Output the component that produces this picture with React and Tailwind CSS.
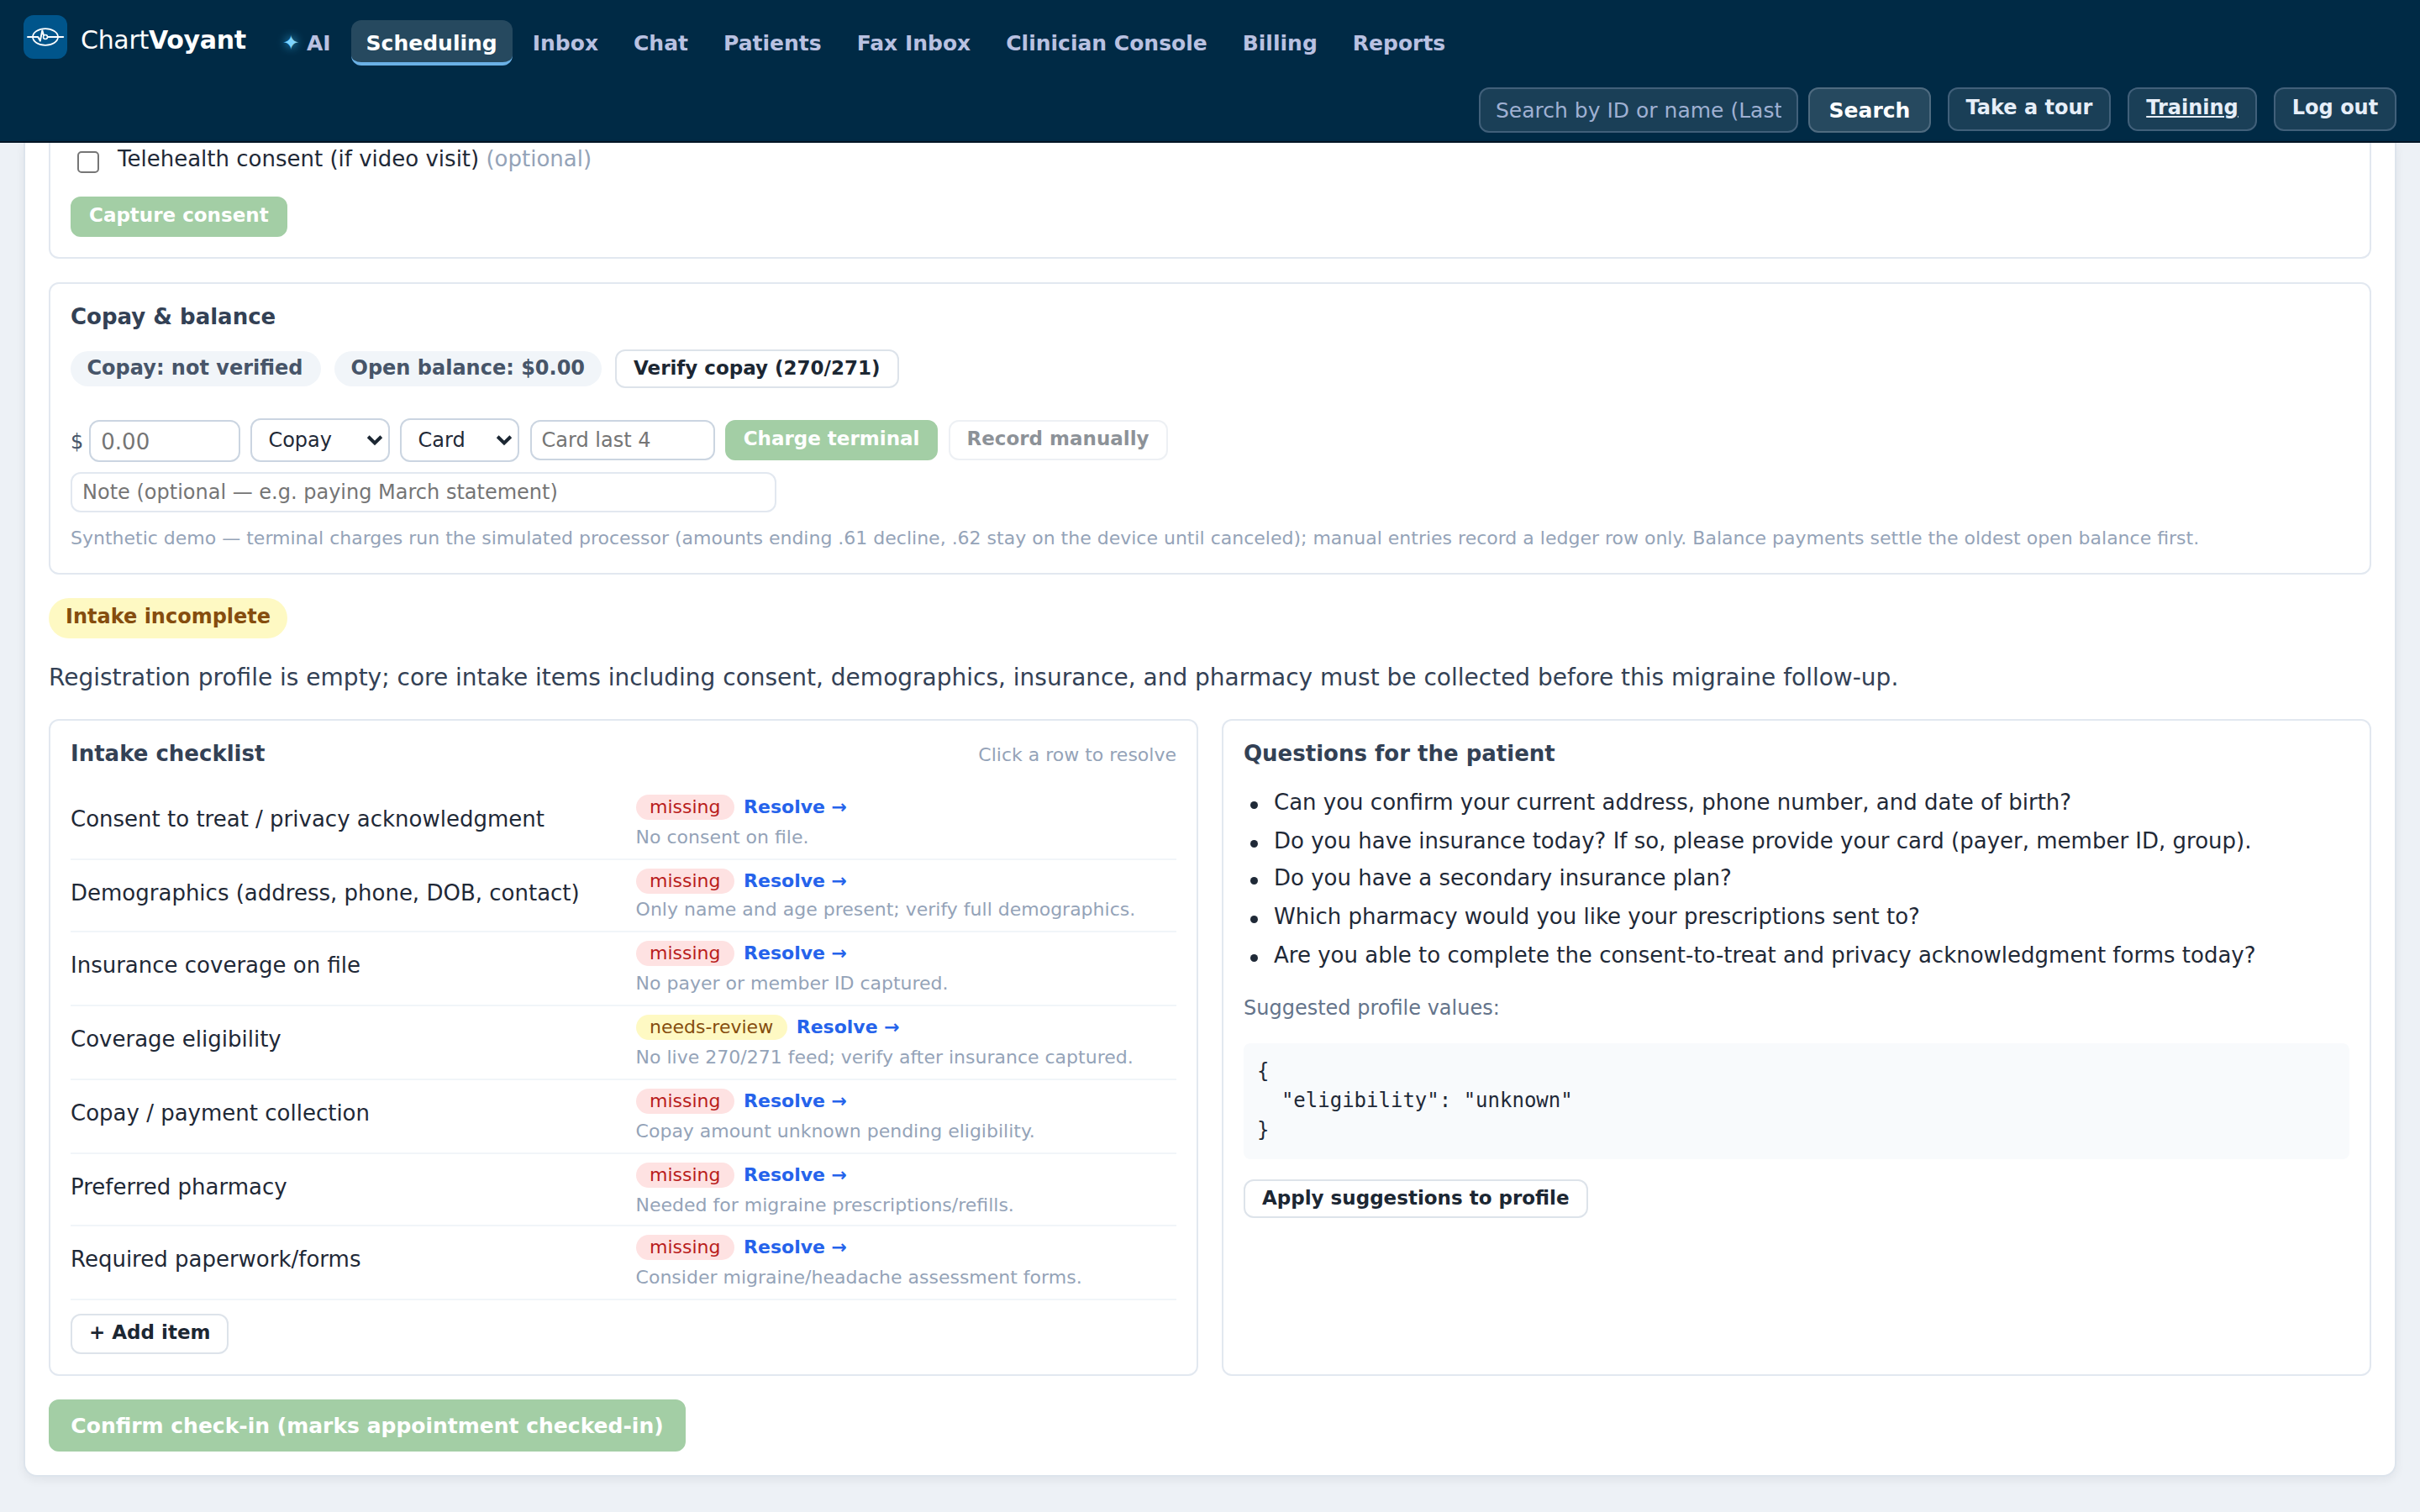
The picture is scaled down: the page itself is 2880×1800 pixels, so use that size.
import React from "react";

const NAV = ["Inbox", "Chat", "Patients", "Fax Inbox", "Clinician Console", "Billing", "Reports"];

const CHECKLIST = [
  { label: "Consent to treat / privacy acknowledgment", status: "missing", note: "No consent on file." },
  { label: "Demographics (address, phone, DOB, contact)", status: "missing", note: "Only name and age present; verify full demographics.", row: "h-[86px]", gap: "mt-0" },
  { label: "Insurance coverage on file", status: "missing", note: "No payer or member ID captured." },
  { label: "Coverage eligibility", status: "needs-review", note: "No live 270/271 feed; verify after insurance captured." },
  { label: "Copay / payment collection", status: "missing", note: "Copay amount unknown pending eligibility." },
  { label: "Preferred pharmacy", status: "missing", note: "Needed for migraine prescriptions/refills.", row: "h-[86px]" },
  { label: "Required paperwork/forms", status: "missing", note: "Consider migraine/headache assessment forms." },
];

const QUESTIONS = [
  { text: "Can you confirm your current address, phone number, and date of birth?", h: "h-[46px]" },
  { text: "Do you have insurance today? If so, please provide your card (payer, member ID, group).", h: "h-[44px]" },
  { text: "Do you have a secondary insurance plan?", h: "h-[46px]" },
  { text: "Which pharmacy would you like your prescriptions sent to?", h: "h-[46px]" },
  { text: "Are you able to complete the consent-to-treat and privacy acknowledgment forms today?", h: "h-[42px]" },
];

function Logo() {
  return (
    <div className="mt-[18px] size-[52px] shrink-0 rounded-[12px] bg-[#00558b]">
      <svg viewBox="0 0 52 52" className="size-full" fill="none" stroke="#fff" strokeLinecap="round" strokeLinejoin="round">
        <ellipse cx="26" cy="26" rx="15" ry="9.8" strokeWidth="1.7" />
        <path d="M5 26H17.2L19.8 30.6L22.3 18.4L24 24" strokeWidth="2" />
        <circle cx="26" cy="26" r="2.5" strokeWidth="1.5" />
        <path d="M28.8 26H47.2" strokeWidth="2" />
      </svg>
    </div>
  );
}

function NavItem({ children, active }) {
  return (
    <a
      className={
        "flex h-[54px] shrink-0 items-start rounded-[12px] border-b-4 px-[18px] pt-[5px] text-[25px] leading-[45px] font-bold whitespace-nowrap " +
        (active ? "border-[#6bb1e6] bg-[#26495f] text-white" : "border-transparent text-[#b9c1e1]")
      }
    >
      {children}
    </a>
  );
}

function HeaderButton({ children, underline, width }) {
  return (
    <button
      className={
        "h-[52px] shrink-0 rounded-[12px] border-2 border-[#41607a] bg-[#1a3f57] pb-[4px] text-center text-[24px] leading-[44px] font-bold whitespace-nowrap text-[#e6eef8] " +
        width +
        (underline ? " underline" : "")
      }
    >
      {children}
    </button>
  );
}

function Button({ children, kind = "plain", size = "h-[48px] pb-[4px]" }) {
  const tone = {
    plain: "border-[#dde3ea] bg-white text-[#1c2733]",
    disabled: "border-[#dde3ea] bg-white text-[#1c2733] opacity-50",
    green: "border-[#a3cea5] bg-[#a3cea5] text-white",
  }[kind];
  return (
    <button className={"block shrink-0 rounded-[12px] border-2 px-[20px] text-[23px] leading-[40px] font-bold whitespace-nowrap " + size + " " + tone}>
      {children}
    </button>
  );
}

function Select({ children, width }) {
  return (
    <div className={"flex h-[52px] shrink-0 items-center justify-between rounded-[12px] border-2 border-[#cbd5e1] bg-white pr-[6px] pl-[19px] text-[24px] leading-[48px] text-[#1f2937] " + width}>
      <span>{children}</span>
      <svg width="20" height="14" viewBox="0 0 20 14" fill="none" stroke="#1c2733" strokeWidth="4">
        <path d="M2.2 2.8L10 10.4L17.8 2.8" />
      </svg>
    </div>
  );
}

function Badge({ children, width }) {
  return (
    <span className={"h-[42px] rounded-full bg-[#f1f5f9] px-[19.5px] text-[24px] leading-[40px] font-bold whitespace-nowrap text-[#475569] " + width}>
      {children}
    </span>
  );
}

function Title({ children }) {
  return <h3 className="text-[26px] leading-[30px] font-bold text-[#334155]">{children}</h3>;
}

function ChecklistRow({ item }) {
  const pill = item.status === "missing" ? "bg-[#fee2e2] text-[#b91c1c]" : "bg-[#fef9c3] text-[#854d0e]";
  return (
    <div className={"flex border-b-2 border-[#f1f5f9] " + (item.row || "h-[88px]")}>
      <div className="w-[672.6px] shrink-0 text-[26px] leading-[78px] text-[#1f2937]">{item.label}</div>
      <div className="min-w-0 flex-1 pt-[10px] text-[22px]">
        <div className="flex h-[30px] gap-[11.2px] leading-[29px]">
          <span className={"rounded-full px-[16.4px] " + pill}>{item.status}</span>
          <a className="font-bold text-[#2563eb]">Resolve →</a>
        </div>
        <div className={"leading-[37px] text-[#94a3b8] " + (item.gap || "mt-[2px]")}>{item.note}</div>
      </div>
    </div>
  );
}

export default function App() {
  return (
    <div className="flex h-[1800px] w-[2880px] flex-col overflow-hidden bg-[#edf1f6] font-['DejaVu_Sans',sans-serif] text-[#1f2937]">
      <header className="flex h-[170px] shrink-0 flex-col border-b-2 border-[#001424] bg-[#002a45] px-[28px]">
        <div className="flex h-[104px] items-start">
          <Logo />
          <div className="mt-[18px] ml-[16px] text-[30px] leading-[59px] tracking-[-0.3px] whitespace-nowrap text-white">
            Chart<b>Voyant</b>
          </div>
          <nav className="mt-[24px] ml-[25.5px] flex gap-[6px]">
            <NavItem>
              <span className="mr-[8.5px] text-[24px] font-normal text-[#7dd3fc] [text-shadow:0_0_12px_#38bdf8]">✦</span>
              AI
            </NavItem>
            <NavItem active>Scheduling</NavItem>
            {NAV.map((label) => (
              <NavItem key={label}>{label}</NavItem>
            ))}
          </nav>
        </div>
        <div className="flex items-start justify-end">
          <input
            placeholder="Search by ID or name (Last"
            className="h-[54px] w-[380px] rounded-[12px] border-2 border-[#41607a] bg-[#1a3f57] px-[18px] pt-px text-[25px] placeholder:text-[#9fb0d2]"
          />
          <button className="mr-[20px] ml-[12px] h-[54px] w-[146px] rounded-[12px] border-2 border-[#4f6b80] bg-[#26495f] pt-px text-center text-[25px] leading-[50px] font-bold text-white">
            Search
          </button>
          <div className="flex gap-[20px]">
            <HeaderButton width="w-[194px]">Take a tour</HeaderButton>
            <HeaderButton width="w-[154px]" underline>
              Training
            </HeaderButton>
            <HeaderButton width="w-[146px]">Log out</HeaderButton>
          </div>
        </div>
      </header>

      <main className="mx-[28px] flex h-[1588px] shrink-0 flex-col gap-[28px] rounded-b-[16px] border-2 border-t-0 border-[#dde4ec] bg-white px-[28px] pb-[28px] shadow-[0_4px_12px_rgba(15,23,42,0.06)]">
        <section className="h-[138px] shrink-0 rounded-b-[12px] border-2 border-t-0 border-[#e2e8f0] px-[24px]">
          <label className="flex h-[38px] items-start pl-[8px] text-[26px] leading-[38px]">
            <span className="mt-[10px] mr-[22px] size-[26px] rounded-[5px] border-2 border-[#767676] bg-white" />
            <span>
              Telehealth consent (if video visit) <span className="text-[#94a3b8]">(optional)</span>
            </span>
          </label>
          <div className="mt-[26px]">
            <Button kind="green">Capture consent</Button>
          </div>
        </section>

        <section className="h-[348px] shrink-0 rounded-[12px] border-2 border-[#e2e8f0] p-[24px]">
          <Title>Copay &amp; balance</Title>
          <div className="mt-[24px] flex items-center gap-[16px]">
            <Badge width="w-[298px]">Copay: not verified</Badge>
            <Badge width="w-[318px]">Open balance: $0.00</Badge>
            <Button size="h-[46px] pb-[2px]">Verify copay (270/271)</Button>
          </div>
          <div className="mt-[36px] flex h-[52px] items-center gap-[12.1px]">
            <label className="mt-[2px] flex items-center gap-[7px] text-[24px] leading-[50px] text-[#475569]">
              <span className="pt-[2px] leading-[48px]">$</span>
              <input placeholder="0.00" className="h-[50px] w-[180px] rounded-[12px] border-2 border-[#cbd5e1] bg-white px-[12px] pt-px text-[26px] placeholder:text-[#757575]" />
            </label>
            <Select width="w-[166px]">Copay</Select>
            <Select width="w-[142px]">Card</Select>
            <input placeholder="Card last 4" className="h-[48px] w-[220px] rounded-[12px] border-2 border-[#cbd5e1] bg-white px-[12px] text-[24px] placeholder:text-[#757575]" />
            <Button kind="green">Charge terminal</Button>
            <Button kind="disabled">Record manually</Button>
          </div>
          <input
            placeholder="Note (optional — e.g. paying March statement)"
            className="mt-[12px] block h-[48px] w-[840px] rounded-[12px] border-2 border-[#e2e8f0] bg-white px-[12px] text-[24px] placeholder:text-[#757575]"
          />
          <p className="mt-[13px] text-[22px] leading-[35px] text-[#94a3b8]">
            Synthetic demo — terminal charges run the simulated processor (amounts ending .61 decline, .62 stay on the device until canceled); manual entries
            record a ledger row only. Balance payments settle the oldest open balance first.
          </p>
        </section>

        <div className="flex h-[116px] shrink-0 flex-col items-start gap-[24px]">
          <span className="h-[48px] shrink-0 rounded-full bg-[#fef9c3] px-[20px] text-[24px] leading-[44px] font-bold text-[#854d0e]">Intake incomplete</span>
          <p className="shrink-0 text-[28px] leading-[45px] text-[#334155]">
            Registration profile is empty; core intake items including consent, demographics, insurance, and pharmacy must be collected before this migraine
            follow-up.
          </p>
        </div>

        <div className="grid h-[782px] shrink-0 grid-cols-2 gap-[28px]">
          <section className="rounded-[12px] border-2 border-[#e2e8f0] p-[24px]">
            <div className="flex items-baseline justify-between">
              <Title>Intake checklist</Title>
              <span className="text-[22px] leading-[26px] text-[#94a3b8]">Click a row to resolve</span>
            </div>
            <div className="mt-[24px] mb-[16px]">
              {CHECKLIST.map((item) => (
                <ChecklistRow key={item.label} item={item} />
              ))}
            </div>
            <Button>+ Add item</Button>
          </section>

          <section className="rounded-[12px] border-2 border-[#e2e8f0] p-[24px]">
            <Title>Questions for the patient</Title>
            <ul className="mt-[22px] text-[26px] leading-[42px]">
              {QUESTIONS.map((q) => (
                <li key={q.text} className={"flex items-start " + q.h}>
                  <span className="mt-[20px] mr-[19px] ml-[8px] size-[9px] rounded-full bg-[#1f2937]" />
                  {q.text}
                </li>
              ))}
            </ul>
            <p className="mt-[23px] text-[24px] leading-[38px] text-[#64748b]">Suggested profile values:</p>
            <pre className="mt-[23px] mb-[24px] h-[138px] rounded-[8px] bg-[#f8fafc] p-[16px] font-['DejaVu_Sans_Mono',monospace] text-[24px] leading-[35px]">
              {'{\n  "eligibility": "unknown"\n}'}
            </pre>
            <Button size="h-[46px] pb-[2px]">Apply suggestions to profile</Button>
          </section>
        </div>

        <button className="h-[62px] w-[758px] shrink-0 self-start rounded-[12px] border-2 border-[#a3cea5] bg-[#a3cea5] pt-px text-center text-[25px] leading-[57px] font-bold text-white">
          Confirm check-in (marks appointment checked-in)
        </button>
      </main>
    </div>
  );
}
